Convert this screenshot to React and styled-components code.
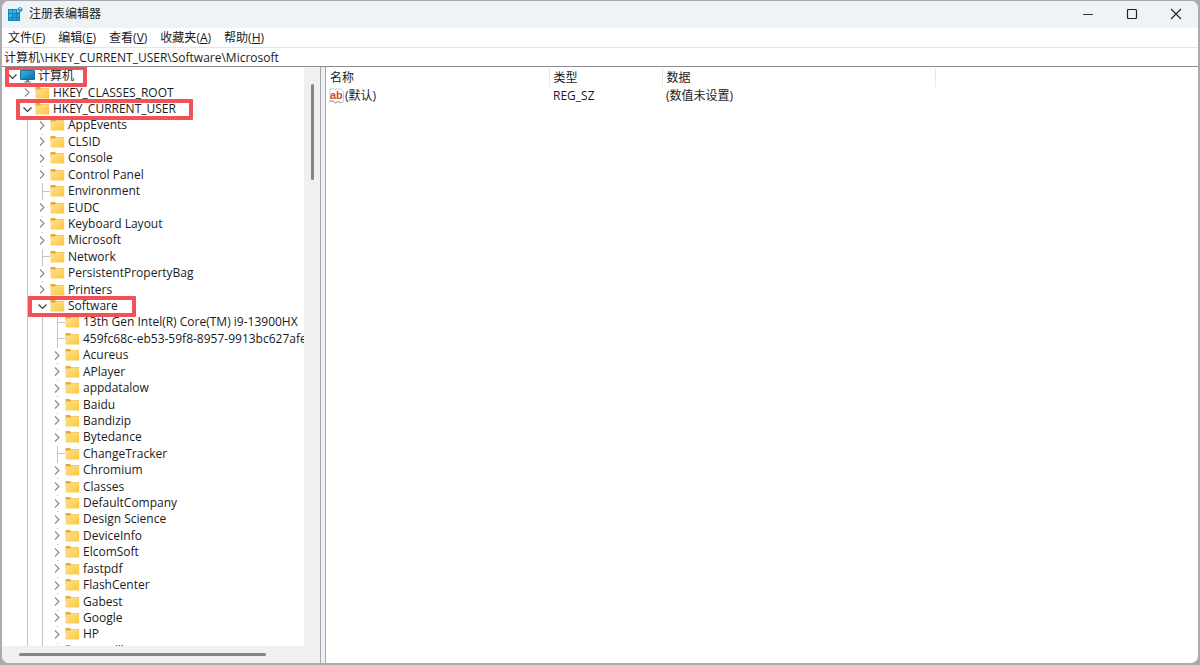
import React, { useState } from "react";
import styled, { createGlobalStyle } from "styled-components";

const menus = [
  { label: "文件", hotkey: "F" },
  { label: "编辑", hotkey: "E" },
  { label: "查看", hotkey: "V" },
  { label: "收藏夹", hotkey: "A" },
  { label: "帮助", hotkey: "H" },
];

const tree = [
  { name: "计算机", level: 0, open: true, computer: true, mark: { left: 0, width: 82 } },
  { name: "HKEY_CLASSES_ROOT", level: 1 },
  { name: "HKEY_CURRENT_USER", level: 1, open: true, mark: { left: -4, width: 177 } },
  { name: "AppEvents", level: 2 },
  { name: "CLSID", level: 2 },
  { name: "Console", level: 2 },
  { name: "Control Panel", level: 2 },
  { name: "Environment", level: 2, leaf: true },
  { name: "EUDC", level: 2 },
  { name: "Keyboard Layout", level: 2 },
  { name: "Microsoft", level: 2 },
  { name: "Network", level: 2, leaf: true },
  { name: "PersistentPropertyBag", level: 2 },
  { name: "Printers", level: 2 },
  { name: "Software", level: 2, open: true, mark: { left: -7, width: 108 } },
  { name: "13th Gen Intel(R) Core(TM) i9-13900HX", level: 3, leaf: true },
  { name: "459fc68c-eb53-59f8-8957-9913bc627afe", level: 3, leaf: true },
  { name: "Acureus", level: 3 },
  { name: "APlayer", level: 3 },
  { name: "appdatalow", level: 3 },
  { name: "Baidu", level: 3 },
  { name: "Bandizip", level: 3 },
  { name: "Bytedance", level: 3 },
  { name: "ChangeTracker", level: 3, leaf: true },
  { name: "Chromium", level: 3 },
  { name: "Classes", level: 3 },
  { name: "DefaultCompany", level: 3 },
  { name: "Design Science", level: 3 },
  { name: "DeviceInfo", level: 3 },
  { name: "ElcomSoft", level: 3 },
  { name: "fastpdf", level: 3 },
  { name: "FlashCenter", level: 3 },
  { name: "Gabest", level: 3 },
  { name: "Google", level: 3 },
  { name: "HP", level: 3 },
  { name: "Icaredll", level: 3 },
];

const RegistryIcon = () => (
  <svg width="16" height="16" viewBox="0 0 16 16" aria-hidden="true">
    <path d="M1 3h9v3h3v9H1z" fill="#1583bd" />
    <path d="M2 4h3v3H2zM6 4h3v3H6zM2 8h3v3H2z" fill="#35b8ea" />
    <path d="M6 8h3v3H6zM10 8h2v3h-2zM2 12h3v2H2zM6 12h3v2H6zM10 12h2v2h-2z" fill="#1d9fd8" />
    <path d="M13 1l2.500 1.200v2.800L13 6.300 10.500 5V2.200z" fill="#3d94c4" />
    <path d="M13 1.700l1.700.800-1.700.900-1.700-.900z" fill="#a9dcf3" />
  </svg>
);

const ComputerIcon = () => (
  <svg width="15" height="14" viewBox="0 0 15 14" aria-hidden="true">
    <defs>
      <linearGradient id="screen" x1="0" y1="0" x2="1" y2="1">
        <stop offset="0" stopColor="#35c1dc" />
        <stop offset="1" stopColor="#0c66a8" />
      </linearGradient>
    </defs>
    <rect x="0.500" y="1.500" width="14" height="9" rx="0.500" fill="url(#screen)" stroke="#176f9f" />
    <path d="M6 11h3v1.500h2v1H4v-1h2z" fill="#6d8794" />
  </svg>
);

const FolderIcon = () => (
  <svg width="15" height="14" viewBox="0 0 15 14" aria-hidden="true">
    <defs>
      <linearGradient id="folder" x1="0" y1="0" x2="1" y2="1">
        <stop offset="0" stopColor="#ffe292" />
        <stop offset="1" stopColor="#fbc740" />
      </linearGradient>
    </defs>
    <path d="M0.500 1h4.300l1.400 1.300H14V6H0.500z" fill="#eba92a" />
    <path d="M0.500 3.600h4.700l1.200-1H14.200V12.500H0.500z" fill="url(#folder)" />
  </svg>
);

const StringIcon = () => (
  <svg width="16" height="16" viewBox="0 0 16 16" aria-hidden="true">
    <path d="M1 1h11l2.500 2.500V14l-2 1-3-1.500-3 1.500L3.500 13 1 13.500z" fill="#fff" stroke="#c6cbcd" />
    <path d="M1 13.300L4 13l2.500 1.800 3-1.300 2.500 1.300" fill="none" stroke="#7fa39d" />
    <text x="1" y="10.500" fontFamily="Liberation Sans, Arial, sans-serif" fontWeight="700" fontSize="11" fill="#d8452b">
      ab
    </text>
  </svg>
);

const Arrow = ({ open }) => (
  <svg width="9" height="9" viewBox="0 0 9 9" fill="none" aria-hidden="true">
    {open ? (
      <path d="M0.500 2.500l4 4 4-4" stroke="#3c3c3c" strokeWidth="1.200" />
    ) : (
      <path d="M2 0.500l4 4-4 4" stroke="#8a8a8a" strokeWidth="1.100" />
    )}
  </svg>
);

const TreeRow = ({ item }) => (
  <Row role="treeitem" aria-level={item.level + 1} aria-expanded={item.leaf ? undefined : !!item.open}>
    {[...Array(item.level).keys()].map((i) => (
      <Guide key={i} $line={i > 0} />
    ))}
    <Node>
      {item.leaf ? (
        <Branch />
      ) : (
        <Toggle type="button" aria-label={item.name} $dots={item.level > 1 && !item.open}>
          <Arrow open={item.open} />
        </Toggle>
      )}
      {item.computer ? <ComputerIcon /> : <FolderIcon />}
      <Name>{item.name}</Name>
      {item.mark && <Mark $left={item.mark.left} $width={item.mark.width} />}
    </Node>
  </Row>
);

const App = () => {
  const [path, setPath] = useState("计算机\\HKEY_CURRENT_USER\\Software\\Microsoft");

  return (
    <Desktop>
      <GlobalStyle />
      <Window>
        <TitleBar>
          <RegistryIcon />
          <Title>注册表编辑器</Title>
          <Controls>
            <ControlButton type="button" aria-label="最小化">
              <svg width="12" height="12" viewBox="0 0 12 12" stroke="#333" fill="none">
                <path d="M1 6.500h10" />
              </svg>
            </ControlButton>
            <ControlButton type="button" aria-label="最大化">
              <svg width="12" height="12" viewBox="0 0 12 12" stroke="#222" fill="none">
                <rect x="1.500" y="1.500" width="9" height="9" rx="1" strokeWidth="1.200" />
              </svg>
            </ControlButton>
            <ControlButton type="button" aria-label="关闭">
              <svg width="12" height="12" viewBox="0 0 12 12" stroke="#222" fill="none">
                <path d="M1 1l10 10M11 1L1 11" strokeWidth="1.100" />
              </svg>
            </ControlButton>
          </Controls>
        </TitleBar>
        <MenuBar>
          {menus.map((menu) => (
            <MenuButton type="button" key={menu.hotkey}>
              {menu.label}(<u>{menu.hotkey}</u>)
            </MenuButton>
          ))}
        </MenuBar>
        <AddressBar aria-label="路径" value={path} onChange={(e) => setPath(e.target.value)} />
        <Panes>
          <TreePane>
            <TreeView>
              <Tree role="tree">
                {tree.map((item) => (
                  <TreeRow key={item.name} item={item} />
                ))}
              </Tree>
            </TreeView>
            <VerticalBar>
              <VerticalThumb />
            </VerticalBar>
            <HorizontalBar>
              <HorizontalThumb />
            </HorizontalBar>
          </TreePane>
          <Splitter />
          <ValuePane>
            <ValueTable>
              <colgroup>
                <NameCol />
                <TypeCol />
                <DataCol />
                <col />
              </colgroup>
              <thead>
                <tr>
                  <HeadCell>名称</HeadCell>
                  <HeadCell>类型</HeadCell>
                  <HeadCell>数据</HeadCell>
                  <td />
                </tr>
              </thead>
              <tbody>
                <tr>
                  <Cell>
                    <ValueName>
                      <StringIcon />
                      (默认)
                    </ValueName>
                  </Cell>
                  <Cell>REG_SZ</Cell>
                  <Cell>(数值未设置)</Cell>
                  <td />
                </tr>
              </tbody>
            </ValueTable>
          </ValuePane>
        </Panes>
      </Window>
    </Desktop>
  );
};

export default App;

const GlobalStyle = createGlobalStyle`
  * {
    box-sizing: border-box;
  }

  body {
    margin: 0;
    color: #1b1b1b;
    font-family: "Open Sans", "Noto Sans CJK SC", sans-serif;
    font-size: 12px;
  }

  button,
  input {
    color: inherit;
    font: inherit;
    border: none;
    padding: 0;
    background: none;
  }

  svg {
    flex: none;
    display: block;
  }
`;

const Desktop = styled.div`
  height: 100vh;
  padding: 1px 2px 2px;
  background-color: #a9abae;
`;

const Window = styled.main`
  height: 100%;
  display: flex;
  flex-direction: column;
  overflow: hidden;
  border-radius: 7px;
  background-color: #fff;
`;

const TitleBar = styled.header`
  height: 27px;
  display: flex;
  align-items: center;
  gap: 6px;
  padding-left: 5px;
  padding-bottom: 1px;
  background-color: #eef3f6;
`;

const Title = styled.h1`
  margin: 0;
  font-size: 12px;
  font-weight: 400;
  line-height: 18px;
`;

const Controls = styled.div`
  margin-left: auto;
  height: 100%;
  display: flex;
`;

const ControlButton = styled.button`
  width: 44px;
  display: flex;
  align-items: center;
  justify-content: center;
`;

const MenuBar = styled.nav`
  height: 20px;
  display: flex;
  align-items: center;
  gap: 13px;
  padding-left: 6px;
  border-bottom: 1px solid #e6e6e6;
`;

const MenuButton = styled.button`
  line-height: 18px;
  white-space: nowrap;
`;

const AddressBar = styled.input`
  height: 19px;
  padding: 0 2px;
  outline: none;
  border-bottom: 1px solid #8c8c8c;
`;

const Panes = styled.div`
  flex: 1;
  min-height: 0;
  display: flex;
`;

const TreePane = styled.aside`
  width: 318px;
  display: grid;
  grid-template-columns: 1fr 16px;
  grid-template-rows: minmax(0, 1fr) 17px;
  background-color: #f0f0f0;
`;

const TreeView = styled.div`
  display: flex;
  flex-direction: column;
  overflow: hidden;
  padding-top: 1px;
  background-color: #fff;
`;

/* runs past the bottom of the view, so that the last row is cut off */
const Tree = styled.div`
  flex: 1;
  margin-bottom: -13px;
  display: grid;
  grid-auto-rows: 1fr;
`;

const Row = styled.div`
  min-height: 0;
  display: flex;
  padding-left: 3px;
  white-space: nowrap;
`;

const Guide = styled.span`
  flex: none;
  width: 15px;
  background: ${({ $line }) =>
    $line ? "linear-gradient(#c4c4c4, #c4c4c4) 7px 0 / 1px 100% no-repeat" : "none"};
`;

const Node = styled.div`
  position: relative;
  display: flex;
  align-items: center;
`;

const Toggle = styled.button`
  width: 15px;
  align-self: stretch;
  display: flex;
  align-items: center;
  justify-content: center;
  background: ${({ $dots }) =>
    $dots ? "linear-gradient(#b4b4b4, #b4b4b4) 7px 0 / 1px 1px no-repeat" : "none"};
`;

const Branch = styled.span`
  width: 15px;
  align-self: stretch;
  background: linear-gradient(#c4c4c4, #c4c4c4) 7px 0 / 1px 100% no-repeat,
    linear-gradient(#c4c4c4, #c4c4c4) 7px 50% / 8px 1px no-repeat;
`;

const Name = styled.span`
  padding-left: 3px;
  line-height: 16px;
`;

const Mark = styled.span`
  position: absolute;
  z-index: 1;
  top: -2px;
  bottom: -3px;
  left: ${({ $left }) => $left}px;
  width: ${({ $width }) => $width}px;
  border: 4px solid #f15257;
  border-radius: 1px;
  pointer-events: none;
`;

const VerticalBar = styled.div`
  padding: 17px 6px 0;
`;

const VerticalThumb = styled.div`
  height: 96px;
  width: 3px;
  margin: 0 auto;
  border-radius: 2px;
  background-color: #858585;
`;

const HorizontalBar = styled.div`
  grid-column: 1 / -1;
  padding: 7px 54px 0 17px;
`;

const HorizontalThumb = styled.div`
  height: 3px;
  border-radius: 2px;
  background-color: #858585;
`;

const Splitter = styled.div`
  width: 6px;
  border: solid #a3a7ad;
  border-width: 0 1px;
  background-color: #eef0f3;
`;

const ValuePane = styled.section`
  flex: 1;
  min-width: 0;
  padding-top: 1px;
`;

const ValueTable = styled.table`
  width: 100%;
  table-layout: fixed;
  border-collapse: collapse;
`;

const NameCol = styled.col`
  width: 223px;
`;

const TypeCol = styled.col`
  width: 113px;
`;

const DataCol = styled.col`
  width: 273px;
`;

const HeadCell = styled.th`
  height: 19px;
  padding: 0 4px;
  border-right: 1px solid #e8e8e8;
  font-weight: 400;
  line-height: 18px;
  text-align: left;
`;

const Cell = styled.td`
  height: 18px;
  padding: 0 4px;
  line-height: 18px;
  white-space: nowrap;

  &:first-child {
    padding-left: 3px;
  }
`;

const ValueName = styled.span`
  display: flex;
  align-items: center;
`;
